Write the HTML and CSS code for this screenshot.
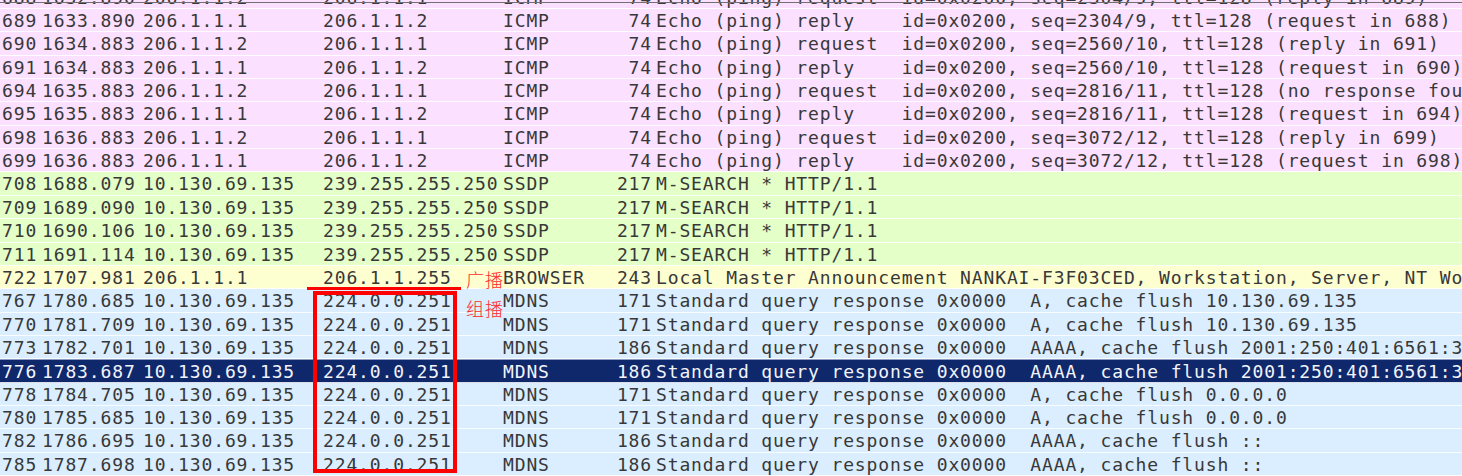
FILE: index.html
```html
<!DOCTYPE html>
<html>
<head>
<meta charset="utf-8">
<link rel="stylesheet" href="styles.css">
</head>
<body>
<div class="list">
  <div class="row icmp partial"><span class="c no">688</span><span class="c time">1632.890</span><span class="c src">206.1.1.2</span><span class="c dst">206.1.1.1</span><span class="c proto">ICMP</span><span class="c len">74</span><span class="c info">Echo (ping) request  id=0x0200, seq=2304/9, ttl=128 (reply in 689)</span></div>
  <div class="row icmp"><span class="c no">689</span><span class="c time">1633.890</span><span class="c src">206.1.1.1</span><span class="c dst">206.1.1.2</span><span class="c proto">ICMP</span><span class="c len">74</span><span class="c info">Echo (ping) reply    id=0x0200, seq=2304/9, ttl=128 (request in 688)</span></div>
  <div class="row icmp"><span class="c no">690</span><span class="c time">1634.883</span><span class="c src">206.1.1.2</span><span class="c dst">206.1.1.1</span><span class="c proto">ICMP</span><span class="c len">74</span><span class="c info">Echo (ping) request  id=0x0200, seq=2560/10, ttl=128 (reply in 691)</span></div>
  <div class="row icmp"><span class="c no">691</span><span class="c time">1634.883</span><span class="c src">206.1.1.1</span><span class="c dst">206.1.1.2</span><span class="c proto">ICMP</span><span class="c len">74</span><span class="c info">Echo (ping) reply    id=0x0200, seq=2560/10, ttl=128 (request in 690)</span></div>
  <div class="row icmp"><span class="c no">694</span><span class="c time">1635.883</span><span class="c src">206.1.1.2</span><span class="c dst">206.1.1.1</span><span class="c proto">ICMP</span><span class="c len">74</span><span class="c info">Echo (ping) request  id=0x0200, seq=2816/11, ttl=128 (no response found!)</span></div>
  <div class="row icmp"><span class="c no">695</span><span class="c time">1635.883</span><span class="c src">206.1.1.1</span><span class="c dst">206.1.1.2</span><span class="c proto">ICMP</span><span class="c len">74</span><span class="c info">Echo (ping) reply    id=0x0200, seq=2816/11, ttl=128 (request in 694)</span></div>
  <div class="row icmp"><span class="c no">698</span><span class="c time">1636.883</span><span class="c src">206.1.1.2</span><span class="c dst">206.1.1.1</span><span class="c proto">ICMP</span><span class="c len">74</span><span class="c info">Echo (ping) request  id=0x0200, seq=3072/12, ttl=128 (reply in 699)</span></div>
  <div class="row icmp"><span class="c no">699</span><span class="c time">1636.883</span><span class="c src">206.1.1.1</span><span class="c dst">206.1.1.2</span><span class="c proto">ICMP</span><span class="c len">74</span><span class="c info">Echo (ping) reply    id=0x0200, seq=3072/12, ttl=128 (request in 698)</span></div>
  <div class="row http"><span class="c no">708</span><span class="c time">1688.079</span><span class="c src">10.130.69.135</span><span class="c dst">239.255.255.250</span><span class="c proto">SSDP</span><span class="c len">217</span><span class="c info">M-SEARCH * HTTP/1.1</span></div>
  <div class="row http"><span class="c no">709</span><span class="c time">1689.090</span><span class="c src">10.130.69.135</span><span class="c dst">239.255.255.250</span><span class="c proto">SSDP</span><span class="c len">217</span><span class="c info">M-SEARCH * HTTP/1.1</span></div>
  <div class="row http"><span class="c no">710</span><span class="c time">1690.106</span><span class="c src">10.130.69.135</span><span class="c dst">239.255.255.250</span><span class="c proto">SSDP</span><span class="c len">217</span><span class="c info">M-SEARCH * HTTP/1.1</span></div>
  <div class="row http"><span class="c no">711</span><span class="c time">1691.114</span><span class="c src">10.130.69.135</span><span class="c dst">239.255.255.250</span><span class="c proto">SSDP</span><span class="c len">217</span><span class="c info">M-SEARCH * HTTP/1.1</span></div>
  <div class="row smb"><span class="c no">722</span><span class="c time">1707.981</span><span class="c src">206.1.1.1</span><span class="c dst">206.1.1.255</span><span class="c proto">BROWSER</span><span class="c len">243</span><span class="c info">Local Master Announcement NANKAI-F3F03CED, Workstation, Server, NT Workstation</span></div>
  <div class="row udp"><span class="c no">767</span><span class="c time">1780.685</span><span class="c src">10.130.69.135</span><span class="c dst">224.0.0.251</span><span class="c proto">MDNS</span><span class="c len">171</span><span class="c info">Standard query response 0x0000  A, cache flush 10.130.69.135</span></div>
  <div class="row udp"><span class="c no">770</span><span class="c time">1781.709</span><span class="c src">10.130.69.135</span><span class="c dst">224.0.0.251</span><span class="c proto">MDNS</span><span class="c len">171</span><span class="c info">Standard query response 0x0000  A, cache flush 10.130.69.135</span></div>
  <div class="row udp"><span class="c no">773</span><span class="c time">1782.701</span><span class="c src">10.130.69.135</span><span class="c dst">224.0.0.251</span><span class="c proto">MDNS</span><span class="c len">186</span><span class="c info">Standard query response 0x0000  AAAA, cache flush 2001:250:401:6561:3c1d</span></div>
  <div class="row udp selected"><span class="c no">776</span><span class="c time">1783.687</span><span class="c src">10.130.69.135</span><span class="c dst">224.0.0.251</span><span class="c proto">MDNS</span><span class="c len">186</span><span class="c info">Standard query response 0x0000  AAAA, cache flush 2001:250:401:6561:3c1d</span></div>
  <div class="row udp"><span class="c no">778</span><span class="c time">1784.705</span><span class="c src">10.130.69.135</span><span class="c dst">224.0.0.251</span><span class="c proto">MDNS</span><span class="c len">171</span><span class="c info">Standard query response 0x0000  A, cache flush 0.0.0.0</span></div>
  <div class="row udp"><span class="c no">780</span><span class="c time">1785.685</span><span class="c src">10.130.69.135</span><span class="c dst">224.0.0.251</span><span class="c proto">MDNS</span><span class="c len">171</span><span class="c info">Standard query response 0x0000  A, cache flush 0.0.0.0</span></div>
  <div class="row udp"><span class="c no">782</span><span class="c time">1786.695</span><span class="c src">10.130.69.135</span><span class="c dst">224.0.0.251</span><span class="c proto">MDNS</span><span class="c len">186</span><span class="c info">Standard query response 0x0000  AAAA, cache flush ::</span></div>
  <div class="row udp"><span class="c no">785</span><span class="c time">1787.698</span><span class="c src">10.130.69.135</span><span class="c dst">224.0.0.251</span><span class="c proto">MDNS</span><span class="c len">186</span><span class="c info">Standard query response 0x0000  AAAA, cache flush ::</span></div>

  <div class="topline"></div>
  <div class="mark-line"></div>
  <div class="mark-box"></div>
  <div class="note note-bcast">广播</div>
  <div class="note note-mcast">组播</div>
</div>
</body>
</html>
```

FILE: styles.css
```css
html, body {
  margin: 0;
  padding: 0;
  background: #ffffff;
  overflow: hidden;
}

.list {
  position: relative;
  width: 1462px;
  height: 476px;
  overflow: hidden;
  font-family: "DejaVu Sans Mono", monospace;
  font-size: 18px;
  letter-spacing: 0.86px;
  color: #383838;
}

.row {
  display: grid;
  grid-template-columns: 40px 101px 180px 180px 101px 51px 1fr;
  height: 23.37px;
  box-sizing: border-box;
  border-bottom: 1px solid rgba(255, 255, 255, 0.85);
  align-items: center;
  white-space: pre;
}

.row.partial {
  margin-top: -14.4px;
}

.c {
  overflow: hidden;
  padding-left: 2px;
  line-height: 22px;
  padding-top: 1px;
}

.len {
  text-align: right;
  padding-right: 1px;
}

.info {
  padding-left: 3px;
  overflow: visible;
}

.icmp { background: #fce0ff; }
.http { background: #e4ffc7; }
.smb  { background: #feffd0; }
.udp  { background: #daeeff; }

.row.selected {
  background: #0f276b;
  color: #f2f4fa;
  border-top: 1px solid #8a9cc0;
}

.topline {
  position: absolute;
  left: 0;
  top: 2px;
  width: 100%;
  height: 1px;
  background: #707070;
}

.mark-line {
  position: absolute;
  left: 307px;
  top: 287px;
  width: 154px;
  height: 3px;
  background: #ff0000;
}

.mark-box {
  position: absolute;
  left: 313px;
  top: 291px;
  width: 144px;
  height: 182px;
  box-sizing: border-box;
  border: 4px solid #ff0000;
}

.note {
  position: absolute;
  font-family: "Noto Sans CJK SC", sans-serif;
  font-size: 18px;
  font-weight: 300;
  line-height: 20px;
  letter-spacing: 1px;
  color: #ff2a2a;
}

.note-bcast {
  left: 466px;
  top: 269px;
}

.note-mcast {
  left: 466px;
  top: 298px;
}
```
